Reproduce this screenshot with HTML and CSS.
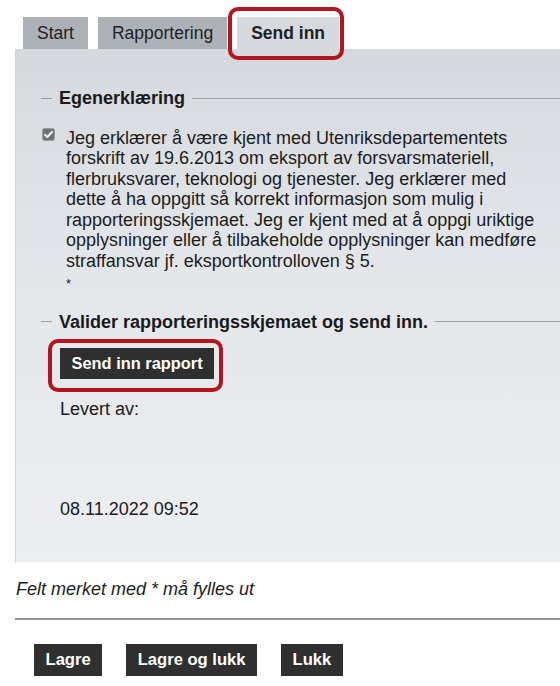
FILE: index.html
```html
<!DOCTYPE html>
<html lang="no">
<head>
	<meta charset="UTF-8">
	<title>Send inn</title>
	<link rel="stylesheet" href="styles.css">
</head>
<body>
	<ul class="tabs">
		<li class="tab">Start</li>
		<li class="tab">Rapportering</li>
		<li class="tab tab-active">Send inn</li>
	</ul>

	<div class="panel">
		<section class="group">
			<h2 class="group-title">Egenerklæring</h2>
			<label class="declaration">
				<span class="checkbox">
					<svg width="13" height="13" viewBox="0 0 13 13">
						<rect x="0.5" y="0.5" width="12" height="12" rx="2" fill="#6f7175" stroke="#9a9ca0"/>
						<path d="M3 6.8 L5.4 9.1 L10 3.9" fill="none" stroke="#fff" stroke-width="1.9" stroke-linecap="round" stroke-linejoin="round"/>
					</svg>
				</span>
				<span class="declaration-text">Jeg erklærer å være kjent med Utenriksdepartementets forskrift av 19.6.2013 om eksport av forsvarsmateriell, flerbruksvarer, teknologi og tjenester. Jeg erklærer med dette å ha oppgitt så korrekt informasjon som mulig i rapporteringsskjemaet. Jeg er kjent med at å oppgi uriktige opplysninger eller å tilbakeholde opplysninger kan medføre straffansvar jf. eksportkontrolloven § 5.<br><span class="asterisk">*</span></span>
			</label>
		</section>

		<section class="group">
			<h2 class="group-title">Valider rapporteringsskjemaet og send inn.</h2>
			<div class="group-body">
				<button class="btn btn-marked" type="button">Send inn rapport</button>
				<p class="field-label">Levert av:</p>
				<p class="field-date">08.11.2022 09:52</p>
			</div>
		</section>
	</div>

	<p class="required-note">Felt merket med * må fylles ut</p>
	<hr class="divider">

	<div class="actions">
		<button class="btn" type="button">Lagre</button>
		<button class="btn" type="button">Lagre og lukk</button>
		<button class="btn" type="button">Lukk</button>
	</div>
</body>
</html>
```

FILE: styles.css
```css
html {
	font-family:"Liberation Sans",Arial,sans-serif;
	font-size:18px;
}

html,body {
	margin:0;
	padding:0;
	background:#fff;
	color:#1c1c1c;
	overflow:hidden;
}

/* tabs */

.tabs {
	display:flex;
	gap:10px;
	margin:17px 0 0 23px;
	padding:0;
	list-style:none;
}

.tab {
	height:32px;
	line-height:33px;
	padding:0 14px;
	background:#acb1b8;
	font-size:17.5px;
	color:#222;
}

.tab-active {
	position:relative;
	background:#d6dadf;
	font-weight:bold;
}

.tab-active::after {
	content:"";
	position:absolute;
	left:-9px;
	right:-5px;
	top:-10px;
	bottom:-11px;
	border:4px solid #b3141f;
	border-radius:10px;
}

/* panel */

.panel {
	margin-left:15px;
	padding:39px 0 43px 25px;
	background:linear-gradient(#d5d9de,#e4e7ea 45%,#eceef1);
	border-left:1px solid #d0d3d8;
}

.group-title {
	display:flex;
	align-items:center;
	gap:7px;
	margin:0;
	font-size:18px;
	line-height:20.5px;
	color:#1a1a1a;
}

.group-title::before,
.group-title::after {
	content:"";
	height:1px;
	background:#9c9fa3;
}

.group-title::before {
	width:11px;
}

.group-title::after {
	flex:1;
}

.declaration {
	display:flex;
	gap:11px;
	margin:19px 0 17px 1px;
	width:495px;
	line-height:20.5px;
}

.checkbox {
	flex:none;
	height:13px;
}

.checkbox svg {
	display:block;
}

.asterisk {
	display:inline-block;
	font-size:13px;
	margin-top:3px;
}

.group-body {
	padding:16px 0 0 19px;
}

.btn {
	display:inline-block;
	height:32px;
	padding:0 11.5px;
	border:0;
	border-radius:0;
	background:#2f2f2f;
	color:#fff;
	font-family:inherit;
	font-size:16.6px;
	font-weight:bold;
	line-height:32px;
}

.btn-marked {
	position:relative;
	height:31px;
	line-height:31px;
	font-size:16.4px;
}

.btn-marked::after {
	content:"";
	position:absolute;
	left:-12px;
	right:-9px;
	top:-9px;
	bottom:-13px;
	border:4px solid #b3141f;
	border-radius:10px;
}

.field-label,
.field-date {
	margin:0;
	line-height:20.5px;
}

.field-label {
	margin-top:20px;
}

.field-date {
	margin-top:79px;
}

/* footer */

.required-note {
	margin:17px 0 0 16px;
	font-style:italic;
	line-height:20.5px;
}

.divider {
	margin:18px 0 0 15px;
	border:0;
	height:2px;
	background:#8f9296;
}

.actions {
	display:flex;
	gap:24px;
	padding:24px 0 0 34px;
}
```
